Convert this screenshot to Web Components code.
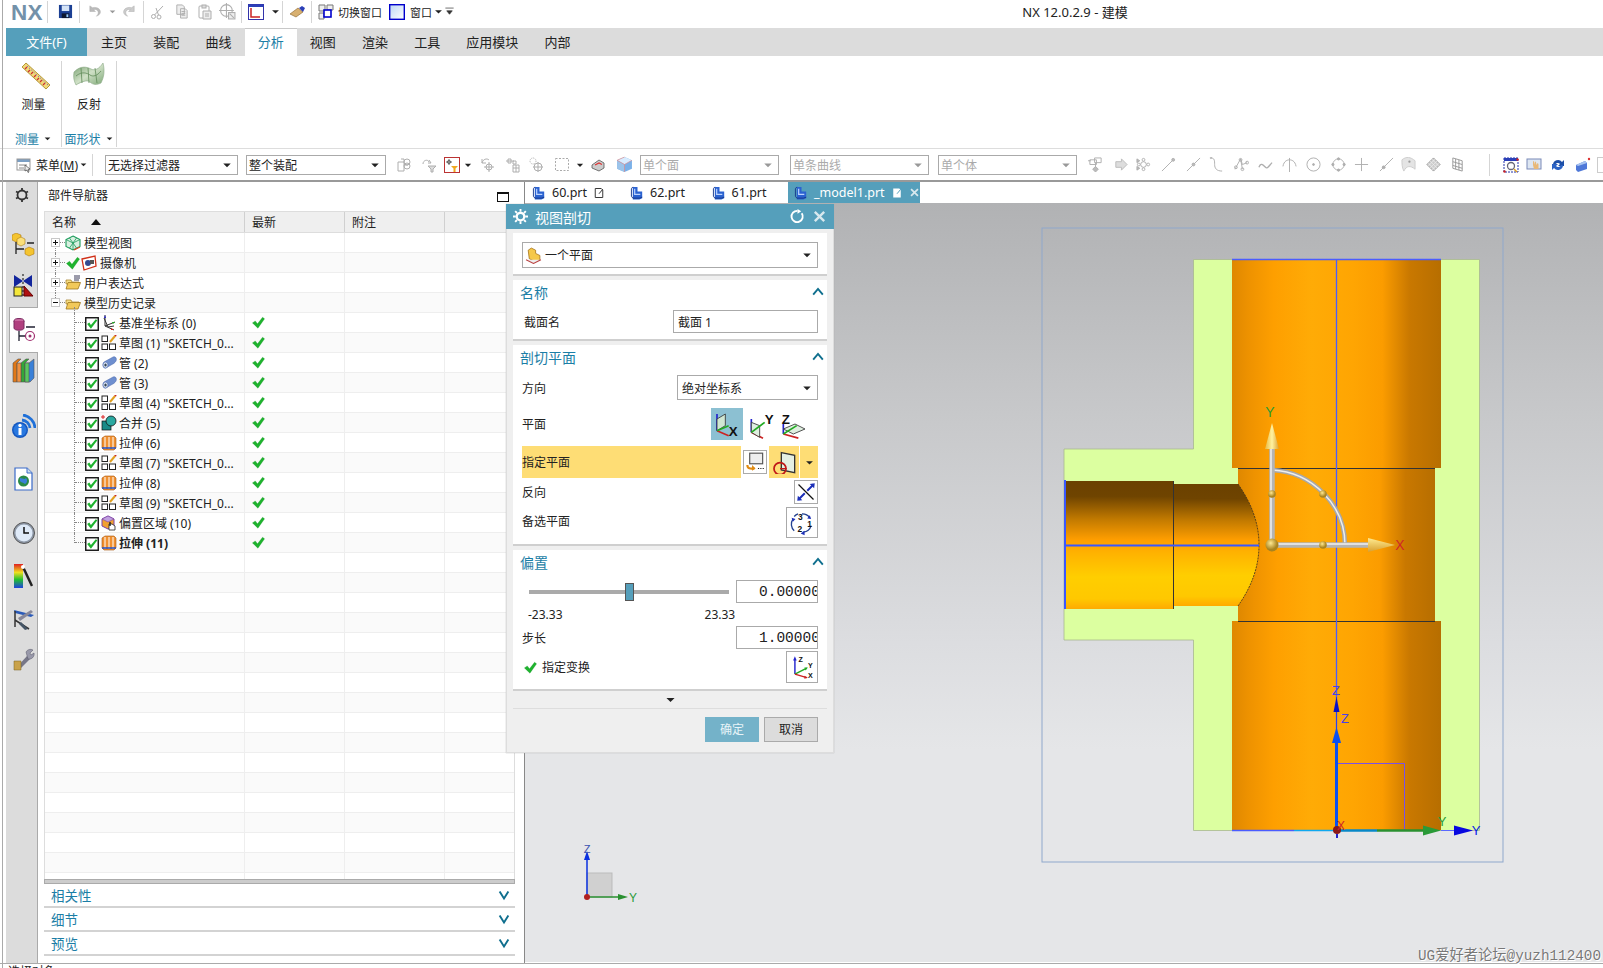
<!DOCTYPE html>
<html lang="zh"><head><meta charset="utf-8"><title>NX 12.0.2.9 - 建模</title>
<style>html,body{margin:0;padding:0;background:#fff;overflow:hidden}body{font:12px 'Noto Sans','Noto Sans CJK SC',sans-serif;color:#222}</style></head>
<body><nx-app></nx-app>
<script>
const G='#aeaeae';
const gs=(s)=>`<g fill="none" stroke="${G}" stroke-width="1">${s}</g>`;
const LT=(x,y,s,size,fill='#111')=>`<text x="${x}" y="${y}" font-size="${size}" font-weight="700" font-family="Liberation Sans" fill="${fill}">${s}</text>`;
const I={
save:`<rect x="1" y="1" width="14" height="14" fill="#1b3f93"/><rect x="4" y="1.500" width="8" height="6" fill="#d5e4f7"/><rect x="4" y="10" width="8" height="5" fill="#0d1730"/><rect x="9" y="11" width="2" height="3" fill="#9cf"/>`,
undo:`<path d="M3 2v6h6L7 6c3-1 5 1 5 3 0 2-1 3-2 4 3-1 5-3 4-6-1-3-5-4-8-3z" fill="#bbb" stroke="#aaa" stroke-width=".5"/>`,
redo:`<path d="M13 2v6H7l2-2c-3-1-5 1-5 3 0 2 1 3 2 4-3-1-5-3-4-6 1-3 5-4 8-3z" fill="#ccc" stroke="#aaa" stroke-width=".5"/>`,
cut:gs(`<circle cx="3.500" cy="12.500" r="2"/><circle cx="9" cy="13" r="2"/><path d="M4.500 11 13 2M8.500 11 6 4"/>`),
copy:gs(`<path d="M3 1h6l2 2v8H3zM7 5h5l2 2v8H7z" fill="#eee"/><path d="M8 8h4M8 10h4M8 12h4"/>`),
paste:gs(`<rect x="2" y="2" width="10" height="12" rx="1"/><rect x="5" y="1" width="4" height="3" fill="#ddd"/><path d="M6 7h8v8H6z" fill="#eee"/><path d="M8 10h4M8 12h4"/>`),
target:gs(`<circle cx="7" cy="7" r="5.500"/><path d="M7 0v14M0 7h14"/><rect x="9" y="9" width="6" height="6" fill="#eee"/><path d="m10 10 4 4"/>`),
wcs:`<rect x=".5" y=".5" width="15" height="15" fill="#fff" stroke="#33a"/><rect x=".5" y=".5" width="15" height="2.500" fill="#2b3fb8"/><path d="M3 4v9h9" fill="none" stroke="#c22" stroke-width="1.500"/>`,
brush:`<path d="M1 10 9 4l5 4-7 5z" fill="#d8b070" stroke="#86622a" stroke-width=".6"/><path d="m10 4 3-2 3 2-2 4z" fill="#2b3fb8"/>`,
sw:`<path d="M1 1h6v6H1zM9 1h6v5H9zM1 9h5v6H1z" fill="#eee" stroke="#777"/><rect x="6" y="6" width="7" height="7" fill="#fff" stroke="#00c" stroke-width="1.600"/>`,
win:`<defs><linearGradient id="w" x1="0" y1="0" x2="1" y2="1"><stop offset="0" stop-color="#bcd6f5"/><stop offset="1" stop-color="#fff"/></linearGradient></defs><rect x=".7" y=".7" width="14.600" height="14.600" fill="url(#w)" stroke="#00c" stroke-width="1.400"/>`,
dn:`<path d="M3 6h10l-5 5z" fill="#222"/>`,
gdn:`<path d="M3 6h10l-5 5z" fill="#999"/>`,
more:`<path d="M2 3h12M4 7h8l-4 5z" fill="#333" stroke="#333"/>`,
menu:`<rect x="1" y="2" width="13" height="3" fill="#7b9fc4"/><rect x="1" y="2" width="13" height="11" fill="none" stroke="#999"/><path d="M3 8h8M3 11h5" stroke="#888"/><path d="m9 8 5 4-2 .5 1 2.500-1 .5-1-2.500-2 1z" fill="#eee" stroke="#333" stroke-width=".6"/>`,
g1:gs(`<path d="M2 5h6v9H2zM5 2h3v3M8 8h4"/><circle cx="11" cy="5" r="3"/><circle cx="11" cy="9" r="3"/>`),
g2:gs(`<path d="M2 7c0-4 5-5 6-2M8 3l2 3-3 0"/><path d="M7 9h8l-3 3v3h-2v-3z" fill="#ddd"/>`),
rf:`<rect x=".5" y=".5" width="15" height="15" fill="#fff" stroke="#b33" stroke-width="1"/><path d="M5 2v6M2 5h6" stroke="#666"/><circle cx="5" cy="5" r="1.600" fill="none" stroke="#666"/><path d="M7 9h7l-2.500 2.500V15h-2v-3.500z" fill="#f0a820"/>`,
g3:gs(`<path d="M3 6c1-4 5-5 7-3M3 2v4h4"/><circle cx="10" cy="10" r="3"/><path d="M10 5v10M5 10h10"/>`),
g4:gs(`<path d="M2 4h8M4 2h3v4H4zM9 4h3v3H9zM9 8h6v7H9zM12 8v7M9 11h6"/>`),
g5:gs(`<circle cx="4" cy="4" r="3" stroke-dasharray="1 1"/><circle cx="9" cy="10" r="4"/><path d="M9 5v10M4 10h10"/>`),
box:`<rect x="1.500" y="1.500" width="13" height="12" fill="none" stroke="#aaa" stroke-dasharray="2 1.500"/>`,
cam:`<path d="M2 8 9 3l5 3v5l-5 3-7-3z" fill="#ccc" stroke="#555" stroke-width=".8"/><path d="m5 8 4-2 3 1.500" stroke="#d33" stroke-width="1.200" fill="none"/>`,
cube:`<path d="M8 1l7 3v8l-7 3-7-3V4z" fill="#7ab0e8"/><path d="M8 8l7-4-7-3-7 3z" fill="#d8ecff"/><path d="M8 8v7l-7-3V4z" fill="#9cc4ea"/><path d="M8 1 1 4l7 4 7-4M8 8v7" fill="none" stroke="#d88" stroke-width=".6"/>`,
v1:gs(`<path d="M2 3h7v5H2zM7 1h7v5H7zM8 6v5"/><path d="M8 10l3 3-3 3-3-3z" fill="#bbb"/><path d="M0 4h3"/>`),
v2:`<path d="M3 5h6V2l6 6-6 6v-3H3z" fill="#ddd" stroke="#bbb"/>`,
v3:gs(`<circle cx="8" cy="8" r="3"/><circle cx="8" cy="3" r="1.500"/><circle cx="8" cy="13" r="1.500"/><circle cx="3" cy="8" r="1.500"/><circle cx="13" cy="8" r="1.500"/><path d="m1 2 3 2-3 2zM1 10l3 2-3 2z" fill="#bbb"/>`),
v4:gs(`<path d="m1 15 12-12"/><circle cx="13" cy="3" r="1.500" fill="#bbb"/>`),
v5:gs(`<path d="m1 15 14-14"/><circle cx="8" cy="8" r="1.500" fill="#bbb"/>`),
v6:gs(`<path d="M2 1c4 0 4 3 4 7s2 7 8 7"/><circle cx="2" cy="1" r=".7"/>`),
v7:gs(`<path d="M1 13 7 2l2 6 5-2M7 2l2 11"/><circle cx="2" cy="11" r="1.500"/><circle cx="7" cy="3" r="1.500"/><circle cx="14" cy="6" r="1.500"/><circle cx="9" cy="13" r="1.500"/>`),
v8:gs(`<path d="M1 11c2-6 5-2 7 0s4-2 7-5" stroke-width="1.400"/>`),
v9:gs(`<path d="M8 1v15M1 10c1-6 5-7 7-7s6 1 7 7"/>`),
v10:gs(`<circle cx="8" cy="8" r="7"/><circle cx="8" cy="8" r="1" fill="${G}"/>`),
v11:gs(`<circle cx="8" cy="8" r="6"/><circle cx="8" cy="2" r="1.200" fill="${G}"/><circle cx="8" cy="14" r="1.200" fill="${G}"/><circle cx="2" cy="8" r="1.200" fill="${G}"/><circle cx="14" cy="8" r="1.200" fill="${G}"/>`),
v12:gs(`<path d="M8 1v14M1 8h14"/>`),
v13:gs(`<path d="m1 15 14-14"/><circle cx="5" cy="11" r="1.500" fill="${G}"/>`),
v14:`<path d="M1 3c5-4 9-3 14 1v9C10 9 6 9 3 15 1 11 1 7 1 3z" fill="#e4e4e4" stroke="#ccc"/><circle cx="9" cy="5" r="1.200" fill="#999"/>`,
v15:`<path d="M8 1l7 7-7 7-7-7z" fill="#ccc" stroke="#999"/><path d="M4 4l8 8M6 2l8 8M2 6l8 8M12 4l-8 8M10 2l-8 8M14 6l-8 8" stroke="#eee" stroke-width=".7"/>`,
v16:gs(`<path d="M3 1l10 3v11L3 12zM3 5l10 3M3 9l10 3M6 2v11M9.500 3v11" stroke="#999"/>`),
c1:`<rect x="1" y="1" width="14" height="14" fill="#fff" stroke="#23a" stroke-dasharray="2 1"/><rect x="1" y="1" width="14" height="3" fill="#2b3fb8"/><circle cx="8" cy="9" r="3.500" fill="none" stroke="#667" stroke-width="1.300"/><path d="m11 12 3 3" stroke="#e0a020" stroke-width="1.500"/><circle cx="1.500" cy="14.500" r="1.200" fill="#c22"/><circle cx="14.500" cy="2.500" r="1.200" fill="#c22"/>`,
c2:`<rect x="1" y="2" width="14" height="10" fill="#dde6f2" stroke="#7a8ab8"/><path d="M7 8V4l1 .5.500 3 .500-3 1 .5.500 3 1-2 1 1v5H8z" fill="#e8b878"/>`,
c3:`<path d="M3 8a5 5 0 0 1 9-3l2-2v6H8l2-2a3 3 0 0 0-5 1z" fill="#1d4fa8"/><path d="M13 8a5 5 0 0 1-9 3l-2 2V7h6L6 9a3 3 0 0 0 5-1z" fill="#2c63c4"/>`,
c4:`<path d="M1 8l9-4 2 2v6l-9 3-2-2z" fill="#4f78d8"/><path d="M10 4l2 2-9 3-2-1z" fill="#a9c4f0"/><circle cx="14" cy="2" r="1.200" fill="#d33"/>`,
part:`<path d="M3 2h5v5h5v7l-3 1.500H3z" fill="#2b62d0"/><path d="M3 2 1.500 4v8L3 14h7l3-1" fill="none" stroke="#15388a"/><path d="M5 4v6h6" stroke="#bcd4ff" stroke-width="1.300" fill="none"/>`,
edit:`<path d="M3 2h8l2 2v10H3z" fill="none" stroke="#333" stroke-width="1.300"/><path d="M8 9l5-6" stroke="#333" stroke-width="1.300"/>`,
editw:`<path d="M3 2h8l2 2v10H3z" fill="#fff"/><path d="M8 9l5-6" stroke="#55a0bb" stroke-width="1.300"/>`,
x:`<path d="m3 3 10 10M13 3 3 13" stroke="#d8e8ee" stroke-width="2.500"/>`,
gear:`<circle cx="8" cy="8" r="4.500" fill="none" stroke="#333" stroke-width="1.800"/><g stroke="#333" stroke-width="1.800"><path d="M8 1v2M8 13v2M2 4.500l2 1M12 10.500l2 1M2 11.500l2-1M12 5.500l2-1"/></g>`,
gearw:`<circle cx="8" cy="8" r="4" fill="none" stroke="#fff" stroke-width="2.400"/><g stroke="#fff" stroke-width="2"><path d="M8 0v3M8 13v3M0 8h3M13 8h3M2.300 2.300l2 2M11.700 11.700l2 2M2.300 13.700l2-2M11.700 4.300l2-2"/></g>`,
parts:`<g stroke="#a06a00" stroke-width=".5"><path d="M4 0l5 2v5L4 9 0 7V2z" fill="#f4c430"/><path d="M9 4l4 2v5l-4 2-4-2V6z" fill="#fbe07a"/><path d="M17 14l5 2v5l-5 2-4-2v-5z" fill="#f4c430"/></g><path d="M4 9v12M4 16h8M15 10h7" stroke="#222" stroke-width="1.300" fill="none"/>`,
con:`<path d="M1 1l9 6-9 6zM19 1l-9 6 9 6z" fill="#12259c"/><path d="M10 0v23" stroke="#000" stroke-dasharray="2 2"/><rect x="1" y="13" width="8" height="9" fill="#f3e63a" stroke="#222"/><path d="M11 22V12l9 10z" fill="#b01010" stroke="#600"/>`,
pmi:`<ellipse cx="6" cy="3" rx="5" ry="2.500" fill="#c86aa0" stroke="#7a2a60"/><path d="M1 3v7c0 3 10 3 10 0V3" fill="#b0407f" stroke="#7a2a60"/><path d="M6 13v10M6 18h6M13 9h9" stroke="#223" stroke-width="1.300" fill="none"/><circle cx="17" cy="18" r="4.500" fill="none" stroke="#a03070" stroke-width="1.200"/><circle cx="17" cy="18" r="1.500" fill="#a03070"/>`,
books:`<g stroke="#555" stroke-width=".6"><path d="M1 5l5-4h3l-4 4v19H1z" fill="#e07818"/><path d="M9 5l5-4h3l-4 4v19H9z" fill="#34a838"/><path d="M17 5l5-4v19l-4 4h-5V5z" fill="#3a80d8"/><path d="M5 5h4v19H5z" fill="#f09040"/><path d="M13 5h4v19h-4z" fill="#5ac860"/></g>`,
info:`<circle cx="8" cy="16" r="8" fill="#1558c0"/><circle cx="8" cy="16" r="6.500" fill="#2878e0"/><rect x="6.500" y="14" width="3" height="7" fill="#fff"/><circle cx="8" cy="11.500" r="1.700" fill="#fff"/><path d="M10 6a9 9 0 0 1 8 8M11 1a14 14 0 0 1 12 13" fill="none" stroke="#1f70d8" stroke-width="2.800"/>`,
web:`<path d="M1 1h12l5 5v17H1z" fill="#fff" stroke="#3a6ac8" stroke-width="1.200"/><path d="M13 1v5h5" fill="#cde" stroke="#3a6ac8"/><circle cx="9.500" cy="14" r="5.500" fill="#2a8a48"/><path d="M6 11c3 0 4 2 6 0 2 2 1 5-1 6-2-2-4-1-5-3z" fill="#3a80d8"/>`,
clock:`<circle cx="11" cy="11" r="10.500" fill="#8f99a8" stroke="#555"/><circle cx="11" cy="11" r="8.500" fill="#dfeaf8"/><path d="M11 5v6h5" stroke="#111" stroke-width="1.500" fill="none"/>`,
color:`<defs><linearGradient id="cc" x1="0" y1="0" x2="0" y2="1"><stop offset="0" stop-color="#e02020"/><stop offset=".35" stop-color="#f0e020"/><stop offset=".65" stop-color="#20c030"/><stop offset="1" stop-color="#2040e0"/></linearGradient></defs><rect x="0" y="0" width="9" height="24" fill="url(#cc)"/><path d="m9 3 9 19" stroke="#222" stroke-width="2.500"/><circle cx="9" cy="3" r="2" fill="#fff"/>`,
meas:`<path d="M1 2l20 5-3 2L2 5z" fill="#2a5ab8"/><path d="M2 3v16M2 12l14 9" stroke="#333" stroke-width="1.500"/><path d="M5 10 18 2l2 2-13 9z" fill="#889"/><path d="M8 14l7 7-3 1-6-6z" fill="#456"/>`,
wr:`<path d="M3 21 14 9l3 3L6 23z" fill="#778"/><path d="M13 5a5 5 0 0 1 7-2l-3 3 1 2 3-2a5 5 0 0 1-6 6z" fill="#99a" stroke="#556" stroke-width=".5"/><path d="M1 14h7v9H1z" fill="#c9a24a" stroke="#7a6020" stroke-width=".5"/>`,
ruler:`<g transform="translate(3 0)"><path d="M1 5 5 1l24 22-4 4z" fill="#f2d878" stroke="#b4983c"/><path d="M4 7l2-2M7 10l2-2M10 12l2-2M13 15l2-2M16 18l2-2M19 20l2-2M22 23l2-2" stroke="#c33" stroke-width="1.200"/><path d="M6 4l21 19" stroke="#55c" stroke-dasharray="1 2"/></g>`,
refl:`<defs><linearGradient id="rf" x1="0" y1="0" x2="1" y2="1"><stop offset="0" stop-color="#6f9a68"/><stop offset=".5" stop-color="#cfe0c6"/><stop offset="1" stop-color="#7ea877"/></linearGradient></defs><path d="M1 10C8 3 14 5 18 7s8 0 12-6c2 8 1 14-2 20-4 2-8 2-11-1S6 21 3 23C1 19 0 15 1 10z" fill="url(#rf)" stroke="#8aa884" stroke-width=".6"/><path d="M8 6 9 21M15 6l1 15M22 6l2 15M3 14c6-5 11-3 14-1s7 1 11-4" stroke="#5f8a58" stroke-width=".8" fill="none"/>`,
ck:`<path d="M.5 8.500 4 6 6.800 9.500 13 1.500 15.500 3.500 7.300 15z" fill="#1eb32e" stroke="#0a8a18" stroke-width=".3"/>`,
cb:`<rect x=".7" y=".7" width="11.600" height="11.600" fill="#fff" stroke="#111" stroke-width="1.300"/><path d="M2 6.500 4 5l1.500 2.500L10 2l1.500 1-6 8z" fill="#1eb32e"/>`,
mv:`<path d="M8 1l7 3.500v7L8 15l-7-3.500v-7z" fill="#d8f0e0" stroke="#1a9a5a" stroke-width="1.100"/><path d="M1 4.500 8 8l7-3.500M8 8v7M4.500 3 11.500 13M11.500 3 4.500 13" fill="none" stroke="#1a9a5a" stroke-width=".8"/><path d="m9 15 6-3" stroke="#e04020" stroke-width="1.200"/>`,
camr:`<path d="M1 4 14 1l1 10-12 4z" fill="#fff" stroke="#d03018" stroke-width="1.300"/><circle cx="7" cy="8" r="3" fill="#334a90"/><rect x="9" y="5" width="4" height="4" fill="#555"/>`,
fo:`<path d="M1 5h5l1 2h7v2H1z" fill="#f8e088" stroke="#a07820" stroke-width=".7"/><path d="M1 14 3 7.500h12.500L13 14z" fill="#f2c95a" stroke="#a07820" stroke-width=".8"/>`,
foe:`<path d="M1 5h5l1 2h7v2H1z" fill="#f8e088" stroke="#a07820" stroke-width=".7"/><path d="M1 14 3 7.500h12.500L13 14z" fill="#f2c95a" stroke="#a07820" stroke-width=".8"/><path d="M9 1h6M9 3h6M9 5h5" stroke="#224" stroke-width=".9"/>`,
dat:`<path d="M4 0v11M4 11l10-4M4 11l9 4M3 3l4 9 6-1" fill="none" stroke="#333" stroke-width="1"/><path d="M4 0 3 3h2z" fill="#22c"/><path d="M14 7l-3 0 1 2z" fill="#2a2"/><path d="M13 15l-3-2v2z" fill="#c22"/>`,
sk:`<rect x="1" y="1" width="5.500" height="5.500" fill="#fff" stroke="#222"/><rect x="1" y="9" width="5.500" height="5.500" fill="#fff" stroke="#222"/><rect x="8.500" y="9" width="6" height="5.500" fill="#fff" stroke="#222"/><path d="m9 7 5-6" stroke="#e0a020" stroke-width="2"/><path d="m14 1 1-1" stroke="#c22" stroke-width="2"/>`,
tube:`<path d="M3 7 12 2c3-1 4 2 3 4s-3 3-5 4L5 13c-3 1-4-4-2-6z" fill="#6e8fcf" stroke="#4a66a8" stroke-width=".5"/><ellipse cx="4.500" cy="10" rx="2.500" ry="3" fill="#dfe8f8" stroke="#4a66a8" stroke-width=".6"/><ellipse cx="4.500" cy="10" rx="1.200" ry="1.600" fill="#345"/>`,
uni:`<rect x="1" y="6" width="9" height="9" fill="#188a88" stroke="#111" stroke-width=".7"/><circle cx="10" cy="6" r="5" fill="#2aa8a0" stroke="#111" stroke-width=".8"/><path d="M2 0v4M0 2h4" stroke="#d22" stroke-width="1"/>`,
ext:`<path d="M1 3 4 1h9l2 2v10l-2 2H3l-2-2z" fill="#f09030" stroke="#a85810" stroke-width=".6"/><path d="M4 2v12M8 2v12M12 2v12" stroke="#fff" stroke-width="1"/><path d="M1 13h14" stroke="#2252c8" stroke-width="1.500"/>`,
off:`<path d="M7 1l6 3v7l-6 3-6-3V4z" fill="#f0a030" stroke="#7a40a8"/><path d="M1 4l6 3 6-3L7 1z" fill="#c0a0e0" stroke="#7a40a8" stroke-width=".6"/><path d="M8 9h3l3 2v4H8z" fill="#fff" stroke="#222" stroke-width=".8"/><path d="M9 7v4" stroke="#222" stroke-width="1.400"/>`,
up:`<path d="M2.500 11 8 4.500l5.500 6.500" fill="none" stroke="#0f6f8e" stroke-width="2.200"/>`,
down:`<path d="M3 4l5 8 5-8" fill="none" stroke="#0f6f8e" stroke-width="2.200"/>`,
onep:`<path d="M3 3l3-2 4 2v3l4 2v4l-4 2-6-3z" fill="#f5c84a" stroke="#a06a10" stroke-width=".7"/><path d="M1 12 8 15.500 15 12" fill="#eee" stroke="#b44"/>`,
px:`<path d="M3 3v10" stroke="#22c" fill="none"/><path d="M3 13l7 3" stroke="#c22" fill="none"/><path d="M3 6 8 3v7l-5 3z" fill="#cfe6d2" stroke="#333" stroke-width=".5"/><path d="M3 13l7-3" stroke="#2a2"/>${LT(10,16,'X',8)}`,
py:`<path d="M2 6v8" stroke="#22c" fill="none"/><path d="M2 14l7 3.500" stroke="#c22"/><path d="M2 8l5 2v7l-5-3z" fill="#dfefe0" stroke="#333" stroke-width=".5"/><path d="M2 14l8-6" stroke="#2a2"/>${LT(10,9,'Y',8)}`,
pz:`<path d="M2 9v6" stroke="#22c"/><path d="M2 15l9 2.500" stroke="#c22"/><path d="M2 12l7-3 6 3-7 3z" fill="#dfefe0" stroke="#333" stroke-width=".5"/><path d="M2 15l8-5" stroke="#2a2"/>${LT(1,9,'Z',8)}`,
plb:`<rect x="4" y="1" width="11" height="9" fill="#eee" stroke="#555"/><path d="M2 11c0 4 4 3 6 3" stroke="#e08a10" stroke-width="1.800" fill="none"/><path d="M6 11l3 3-3 2z" fill="#e08a10"/><path d="M11 14h1M13 14h1M15 14h1" stroke="#222"/>`,
pln:`<path d="M7 2l10 2v13l-10-2z" fill="#e4efe2" stroke="#333"/><circle cx="6" cy="14" r="4.500" fill="none" stroke="#c01818" stroke-width="1.300"/><path d="M6 14h5" stroke="#c01818"/>`,
rev:`<path d="M2 2l12 12" stroke="#111"/><path d="m14 2-5 5M2 14l5-5" stroke="#1c2fb8" stroke-width="1.600"/><path d="m15 1-4 .5L14.500 5zM1 15l4-.5L1.500 11z" fill="#1c2fb8"/>`,
rot:`<path d="M10 3a7 7 0 0 1 6 3M17 12a7 7 0 0 1-6 5M4 16a7 7 0 0 1-1-9M4 5a7 7 0 0 1 3-2" fill="none" stroke="#22408f"/><path d="m17 7-3-.500 2-2.500zM9 18l3-2v3.500zM2 6l3 1-2 2z" fill="#1c2fb8"/>${LT(7,8,'3',6.500)}${LT(14,13,'1',6.500)}${LT(6.500,17,'2',6.500)}`,
csys:`<path d="M5 17V5" stroke="#22c" stroke-width="1.200"/><path d="M5 17 15 12" stroke="#2a2" stroke-width="1.200"/><path d="M5 17 15 20" stroke="#c22" stroke-width="1.200"/><path d="M5 2 3.500 5.500h3z" fill="#22c"/><path d="m16 11.500-3 0 1 2.500z" fill="#2a2"/><path d="m16 20-3-1.500v2.500z" fill="#c22"/>${LT(8,7,'Z',6)}${LT(16,12,'Y',6)}${LT(16,20.500,'X',6)}`,
reset:`<path d="M12.500 4.500A6 6 0 1 1 8 2" fill="none" stroke="#fff" stroke-width="2"/><path d="M8 0v5l4-2.500z" fill="#fff"/>`,
};
const ic=(n,w=16,h=w,vw=16,vh=vw)=>`<svg width="${w}" height="${h}" viewBox="0 0 ${vw} ${vh}" style="display:block;flex:none">${I[n]}</svg>`;
const define=(tag,css,html)=>{customElements.define(tag,class extends HTMLElement{
  constructor(){super();this.attachShadow({mode:'open'})}
  connectedCallback(){this.shadowRoot.innerHTML=`<style>${css}</style>`+(typeof html==='function'?html(this):html)}
})};
/* lays items out in flow, with margins worked out from each item's intended left edge */
const flowRow=(items)=>{let p=0,o='';for(const[x,w,c]of items){o+=`<span style="margin-left:${x-p}px;flex:none;width:${w}px;display:flex;align-items:center;justify-content:center">${c}</span>`;p=x+w}return o};
const sep=(x,h=22)=>[x,1,`<i style="display:block;width:1px;height:${h}px;background:#d5d5d5"></i>`];
const txt=(s,st='')=>`<span style="white-space:nowrap;${st}">${s}</span>`;

define('nx-select',`:host{display:flex;align-items:center;box-sizing:border-box;border:1px solid #aaa;background:#fff;height:100%;width:100%;padding:0 4px 0 2px;font-size:12px;color:#222;white-space:nowrap}
:host([off]){color:#aaa}.t{flex:1;display:flex;align-items:center;gap:3px}`,
 e=>`<span class="t"><slot></slot></span>${ic(e.hasAttribute('off')?'gdn':'dn',12)}`);

define('nx-titlebar',`:host{display:flex;align-items:center;height:28px;box-sizing:border-box;padding-bottom:5px;background:#fff;font-size:11px}`,()=>flowRow([
 [10,34,`<span style="font:bold 22.500px 'Liberation Sans';color:#7391a9;letter-spacing:.3px;line-height:24px;margin-top:3px">NX</span>`],
 sep(47),[58,15,ic('save',15)],sep(79),[87,15,ic('undo',15)],[108,9,ic('gdn',9)],[122,15,ic('redo',15)],sep(143),
 [150,16,ic('cut',16)],[174,15,ic('copy',15)],[197,16,ic('paste',16)],[219,17,ic('target',17)],sep(241),
 [248,16,ic('wcs',16)],[270,11,ic('dn',11)],sep(282),[289,16,ic('brush',16)],sep(311),[318,16,ic('sw',16)],
 [338,44,txt('切换窗口')],[389,16,ic('win',16)],[409,24,txt('窗口')],[433,11,ic('dn',11)],[444,11,ic('more',11)],
 [1023,104,txt('NX 12.0.2.9 - 建模','font-size:13px')]]));

define('nx-tab',`:host{display:flex;align-items:center;justify-content:center;height:28px;width:52.200px;flex:none;font-size:13px;color:#222;box-sizing:border-box;padding-bottom:2px}
:host([on]){background:#fff;color:#1b7ea6;border-top:1px solid #c8c8c8}:host([wide]){width:78px}:host([file]){width:81px;background:#559fbb;color:#fff;margin-right:1px}`,`<slot></slot>`);
define('nx-tabs',`:host{display:flex;height:28px;background:#dcdcdc;margin-left:6px}`,`<slot></slot>`);
define('nx-rbtn',`:host{display:flex;flex-direction:column;align-items:center;font-size:12px;gap:5px;padding-top:1px;white-space:nowrap}.i{height:28px;display:flex;align-items:center}`,
 e=>`<span class="i">${ic(e.getAttribute('i'),32,28,32,28)}</span><slot></slot>`);
define('nx-rgroup',`:host{display:flex;flex-direction:column;width:55px;height:86px;box-sizing:border-box;border-right:1px solid #d5d5d5}
:host([first]){width:56px}.b{flex:1;display:flex;justify-content:center;min-height:0}.l{display:flex;align-items:center;justify-content:center;gap:4px;height:17px;color:#1b7ea6;font-size:12px;white-space:nowrap;flex:none}`,
 e=>`<div class="b"><slot></slot></div><div class="l">${e.getAttribute('label')}${ic('dn',9)}</div>`);
define('nx-ribbon',`:host{display:flex;height:93px;box-sizing:border-box;padding:5px 0 0 6px;border-bottom:1px solid #ddd;background:#fff}`,`<slot></slot>`);

define('nx-toolbar',`:host{display:flex;align-items:center;height:33px;box-sizing:border-box;border-bottom:2px solid #999;background:#fff;overflow:hidden;font-size:12px}
nx-select{height:20px}`,()=>{
 const sel=(s,off)=>`<nx-select ${off?'off':''}>${s}</nx-select>`;
 const base=[[16,16,ic('menu',16)],[36,42,txt('菜单(<u>M</u>)')],[79,9,ic('dn',9)],sep(92),
 [105,133,sel('无选择过滤器')],[246,140,sel('整个装配')],[396,16,ic('g1',16)],[421,16,ic('g2',16)],[444,16,ic('rf',16)],[463,10,ic('dn',10)],
 [479,16,ic('g3',16)],[504,16,ic('g4',16)],[529,16,ic('g5',16)],[554,16,ic('box',16)],[575,10,ic('dn',10)],[590,16,ic('cam',16)],[616,17,ic('cube',17)],
 [640,139,sel('单个面',1)],[790,139,sel('单条曲线',1)],[938,139,sel('单个体',1)]];
 const xs=[[1088,'v1'],[1113,'v2'],[1136,'v3'],[1161,'v4'],[1186,'v5'],[1209,'v6'],[1234,'v7'],[1258,'v8'],[1282,'v9'],[1306,'v10'],[1331,'v11'],[1354,'v12'],[1379,'v13'],[1401,'v14'],[1426,'v15'],[1450,'v16']];
 xs.forEach(([x,n])=>base.push([x,15,ic(n,15)]));
 base.push(sep(1489,22),[1503,16,ic('c1',16)],[1526,16,ic('c2',16)],[1550,16,ic('c3',16)],[1575,16,ic('c4',16)],[1597,6,`<i style="display:block;width:6px;height:16px;box-sizing:border-box;border:1px solid #ccc;border-right:0"></i>`]);
 return flowRow(base)});

define('nx-rail-item',`:host{display:flex;justify-content:center;align-items:center;flex:none}
:host([on]){background:#fff;border:1px solid #aaa;border-right:0;margin:0 -1px 0 3px;box-sizing:border-box;height:46px;position:relative;z-index:1}`,
 e=>{const w=+e.getAttribute('w')||24,h=+e.getAttribute('h')||24;return ic(e.getAttribute('i'),w,h,+e.getAttribute('vw')||w,+e.getAttribute('vh')||h)});
define('nx-rail',`:host{display:flex;flex-direction:column;width:32px;box-sizing:border-box;background:#dcdcdc;border-right:1px solid #aaa;margin-left:6px;flex:none}`,`<slot></slot>`);

define('nx-row',`:host{display:grid;grid-template-columns:200px 100px 100px 1fr;height:20px;box-sizing:border-box;border-bottom:1px solid #eee;font-size:12px;color:#222;flex:none}
:host([alt]){background:#fafafa}
.c{border-right:1px solid #eee;display:flex;align-items:center;position:relative;white-space:nowrap;box-sizing:border-box}
.c:last-child{border:0}
.e{position:absolute;left:6px;top:5px;width:9px;height:9px;box-sizing:border-box;border:1px solid #c8c8c8;background:#fff;z-index:1;display:block}
.e svg{display:block}
.v{position:absolute;border-left:1px dotted #888}.h{position:absolute;border-top:1px dotted #888}
.l{padding-left:7px}`,e=>{
 const lvl=+e.getAttribute('level')||0,i=e.getAttribute('i'),exp=e.getAttribute('exp'),pre=e.hasAttribute('pre');
 let c='';
 if(!i)return `<div class="c"></div><div class="c"></div><div class="c"></div><div class="c"></div>`;
 if(lvl===0){
  c+=`<span class="e"><svg width="7" height="7"><path d="M1 3.500h5${exp==='+'?'M3.500 1v5':''}" stroke="#111"/></svg></span>`;
  if(e.hasAttribute('vf'))c+=`<i class="v" style="left:10px;top:0;height:20px"></i>`;
  if(e.hasAttribute('vt'))c+=`<i class="v" style="left:10px;top:9px;height:11px"></i>`;
  if(e.hasAttribute('vb'))c+=`<i class="v" style="left:10px;top:0;height:9px"></i>`;
  c+=`<i class="h" style="left:15px;top:9px;width:5px"></i>`;
  if(exp==='−')c+=`<i class="v" style="left:29px;top:14px;height:6px"></i>`;
  if(pre)c+=`<span style="margin-left:21px;margin-right:1px">${ic('ck',14)}</span>`;
  c+=`<span style="margin-left:${pre?0:20}px;margin-right:3px">${ic(i,16)}</span>`;
 }else{
  c+=`<i class="v" style="left:29px;top:0;height:${e.hasAttribute('last')?10:20}px"></i><i class="h" style="left:30px;top:9px;width:10px"></i>`;
  c+=`<span style="margin-right:2px;margin-left:0;margin-top:2px">${ic('cb',14,14,13,13)}</span><span style="margin-right:2px">${ic(i,16)}</span>`;
 }
 return `<div class="c" style="padding-left:${lvl?40:0}px">${c}<slot></slot></div><div class="c l">${e.hasAttribute('ok')?ic('ck',13):''}</div><div class="c"></div><div class="c"></div>`});

define('nx-tree',`:host{display:block;margin-left:6px;width:471px;box-sizing:border-box;border-left:1px solid #ddd;border-right:1px solid #ddd;height:668px;overflow:hidden;flex:none}
.hd{display:grid;grid-template-columns:200px 100px 100px 1fr;height:22px;background:#efefef;border-top:1px solid #ddd;box-sizing:border-box;font-size:12px;border-bottom:1px solid #ddd}
.hd span{border-right:1px solid #d0d0d0;padding-left:7px;display:flex;align-items:center;gap:14px}.hd span:last-child{border:0}
.body{display:flex;flex-direction:column;height:646px;overflow:hidden}`,`<div class="hd"><span>名称 <svg width="12" height="8"><path d="M1 7h10L6 1z" fill="#111"/></svg></span><span>最新</span><span>附注</span><span></span></div><div class="body"><slot></slot></div>`);

define('nx-fold',`:host{display:flex;align-items:center;justify-content:space-between;height:24px;box-sizing:border-box;margin-left:6px;width:471px;border-bottom:2px solid #d3d3d3;padding:0 4px 0 7px;color:#1b7ea6;font-size:13.500px;flex:none}`,`<slot></slot>${ic('down',14)}`);
define('nx-navigator',`:host{display:flex;flex-direction:column;width:487px;box-sizing:border-box;border-right:1px solid #888;background:#fff;flex:none;overflow:hidden}
.tt{display:flex;justify-content:space-between;align-items:center;height:29px;padding:0 15px 3px 10px;box-sizing:border-box;flex:none}
.mx{width:12px;height:10px;border:1.500px solid #111;border-top-width:2.500px;box-sizing:border-box;margin-top:3px}`,
 `<div class="tt"><span>部件导航器</span><i class="mx"></i></div><slot></slot>`);

define('nx-scroll',`:host{display:block;margin-left:6px;width:471px;height:5px;box-sizing:border-box;border:1px solid #aaa;background:#ccc;flex:none}`,``);

define('nx-doctab',`:host{display:flex;align-items:center;height:21px;flex:none;font-size:12.500px;color:#222;gap:5px;white-space:nowrap;box-sizing:border-box}
:host([on]){background:#559fbb;color:#fff;padding:0 0 0 6px}`,e=>`${ic('part',15)}<slot></slot>${e.hasAttribute('ed')?`<span style="margin-left:1px">${ic(e.hasAttribute('on')?'editw':'edit',12)}</span>`:''}${e.hasAttribute('on')?`<span style="margin-left:1px">${ic('x',11)}</span>`:''}`);
define('nx-doctabs',`:host{display:flex;height:21px;background:#fff;padding-left:7px;flex:none}`,`<slot></slot>`);

define('nx-viewport',`:host{display:block;height:759px;flex:none;background:linear-gradient(#b1b2b4 0,#c8c9cb 29%,#dcdde0 58%,#e5e6e8 72%,#e5e6e8 100%)}svg{display:block}text{font-family:'Liberation Sans',sans-serif}`,
`<svg width="1078" height="759" viewBox="525 203 1078 759"><defs>
<linearGradient id="ho"><stop offset="0" stop-color="#df8800"/><stop offset=".08" stop-color="#ee9200"/><stop offset=".2" stop-color="#fe9f00"/><stop offset=".38" stop-color="#ffab06"/><stop offset=".58" stop-color="#ffa502"/><stop offset=".72" stop-color="#fb9c00"/><stop offset=".85" stop-color="#c97800"/><stop offset="1" stop-color="#b76e00"/></linearGradient>
<linearGradient id="ve" x1="0" y1="0" x2="0" y2="1"><stop offset="0" stop-color="#6b4100"/><stop offset=".12" stop-color="#6f4400"/><stop offset=".3" stop-color="#c27a00"/><stop offset=".46" stop-color="#ff9e00"/><stop offset=".56" stop-color="#ffb200"/><stop offset=".75" stop-color="#ffce00"/><stop offset=".92" stop-color="#ffc800"/><stop offset="1" stop-color="#ffaa00"/></linearGradient>
<linearGradient id="cy" x1="0" y1="0" x2="1" y2="0"><stop offset="0" stop-color="#e8b840"/><stop offset=".5" stop-color="#fff2a0"/><stop offset="1" stop-color="#dca030"/></linearGradient>
<linearGradient id="cx" x1="0" y1="0" x2="0" y2="1"><stop offset="0" stop-color="#ffeb90"/><stop offset="1" stop-color="#d8a030"/></linearGradient>
<radialGradient id="sp" cx=".4" cy=".35"><stop offset="0" stop-color="#ffe890"/><stop offset="1" stop-color="#a88420"/></radialGradient></defs>
<rect x="1042" y="228" width="461" height="634" fill="none" stroke="#8fa8cc"/>
<path d="M1193.500 259.500h286v571h-286v-190.500h-129.500v-191h129.500z" fill="#dcffa0" stroke="#a8b890" stroke-width=".8"/>
<rect x="1232" y="259" width="209" height="209" fill="url(#ho)"/><rect x="1238" y="468" width="197" height="153" fill="url(#ho)"/><rect x="1232" y="621" width="209" height="209" fill="url(#ho)"/>
<rect x="1065" y="481" width="108" height="128" fill="url(#ve)"/>
<path d="M1173 484h65c14 20 21 40 21 61s-7 41-21 61h-65z" fill="url(#ve)"/>
<path d="M1238 484c14 20 21 40 21 61s-7 41-21 61" fill="none" stroke="#3a3020" stroke-dasharray="2 1" stroke-width=".8"/>
<path d="M1173.500 481v128M1238 468.500h197M1238 621.500h197" stroke="#333" stroke-width="1"/>
<path d="M1336.500 259v571M1232 259.500h209" stroke="#4a5cff" stroke-width="1.300"/>
<path d="M1065 545.500h194M1065 480v129" stroke="#3a58ff" stroke-width="2"/>
<path d="M1272 470c40 2 73 35 73 75" fill="none" stroke="#a8a8a8" stroke-width="4.500"/><path d="M1272 470c40 2 73 35 73 75" fill="none" stroke="#eee" stroke-width="1.500"/>
<path d="M1272 545v-96M1272 545h96" stroke="#b4b4b4" stroke-width="5.500"/><path d="M1271 545v-96M1272 544h96" stroke="#f0f0f0" stroke-width="1.500"/>
<path d="M1272 423l7 26h-14z" fill="url(#cy)"/><path d="M1395 545l-27 7v-14z" fill="url(#cx)"/>
<circle cx="1272" cy="545" r="6.500" fill="url(#sp)"/><circle cx="1272" cy="494" r="3.800" fill="url(#sp)"/><circle cx="1323" cy="494" r="3.800" fill="url(#sp)"/><circle cx="1323" cy="545" r="3.800" fill="url(#sp)"/>
<text x="1270" y="417" font-size="14" fill="#2c9a30" text-anchor="middle">Y</text><text x="1400" y="550" font-size="14" fill="#d02828" text-anchor="middle">X</text>
<path d="M1337 763.500h67.500V830" fill="none" stroke="#7a50e8"/>
<path d="M1336.500 697v133" stroke="#2a40f0"/><path d="M1336.500 743v88" stroke="#0a50f0" stroke-width="3"/>
<path d="M1336.500 727l4.500 16h-9z" fill="#0a50f0"/><path d="M1336.500 697l3 15h-6z" fill="#0a10c8"/>
<path d="M1232 830.500h62" stroke="#4a5cff" stroke-width="1.500"/><path d="M1294 830.500h43" stroke="#10a8f0" stroke-width="1.500"/><path d="M1336 830.500h41" stroke="#0888c8" stroke-width="2.500"/><path d="M1377 830.500h46" stroke="#2a9030" stroke-width="2.500"/>
<path d="M1441 830.500l-18-5v10z" fill="#2a9a38"/><path d="M1441 830.500h16" stroke="#5a68ff"/><path d="M1473 830.500l-19-5v10z" fill="#0808e0"/>
<circle cx="1337" cy="830" r="4" fill="#8a1818"/><path d="M1337 834v4" stroke="#22c" stroke-width="2"/>
<text x="1336" y="695" font-size="13" fill="#4a40e8" text-anchor="middle">Z</text><text x="1345" y="723" font-size="13" fill="#4a40e8" text-anchor="middle">Z</text><text x="1341" y="830" font-size="12" fill="#d02828" text-anchor="middle">X</text>
<text x="1442" y="826" font-size="13" fill="#2a9a38" text-anchor="middle">Y</text><text x="1476" y="835" font-size="13" fill="#0a20e8" text-anchor="middle">Y</text>
<rect x="587" y="873" width="25" height="24" fill="#d0d0d0" stroke="#bbb"/>
<path d="M587 897v-40" stroke="#0a30e0" stroke-width="1.500"/><path d="M587 851l3 9h-6z" fill="#0a30e0"/><path d="M587 897h32" stroke="#2a9030" stroke-width="1.500"/><path d="M628 897l-10-3v6z" fill="#2a9030"/><circle cx="587" cy="897" r="3" fill="#b02020"/>
<text x="587" y="853" font-size="11" fill="#3a50b0" text-anchor="middle">Z</text><text x="633" y="902" font-size="12" fill="#2a9a38" text-anchor="middle">Y</text>
</svg>`);

/* dialog */
define('nx-card',`:host{display:block;background:#fff;margin:0 6px 4px;border-bottom:2px solid #cfcfcf;box-sizing:border-box;padding:0 9px;font-size:12px}
.h{display:flex;justify-content:space-between;align-items:center;height:26px;margin:0 -7px 0 -2px;padding-bottom:2px;box-sizing:border-box;color:#1b7ea6;font-size:14px}
.b{display:flex;flex-direction:column}`,
 e=>`${e.getAttribute('heading')?`<div class="h">${e.getAttribute('heading')}${ic('up',14)}</div>`:''}<div class="b"><slot></slot></div>`);
define('nx-frow',`:host{display:flex;align-items:center;justify-content:space-between;flex:none;white-space:nowrap}`,`<slot></slot>`);
define('nx-ibtn',`:host{display:flex;align-items:center;justify-content:center;box-sizing:border-box;border:1px solid #aaa;background:#fff;flex:none}`,
 e=>ic(e.getAttribute('i'),+e.getAttribute('s')||18,+e.getAttribute('s')||18,+e.getAttribute('v')||16,+e.getAttribute('v')||16));
define('nx-input',`:host{display:flex;align-items:center;box-sizing:border-box;border:1px solid #aaa;background:#fff;flex:none;overflow:hidden;font-size:12px;padding:0 4px;white-space:nowrap}
:host([num]){justify-content:flex-start;padding-left:22px;font:14.500px 'Liberation Mono',monospace;color:#222;padding-right:0}`,`<slot></slot>`);
define('nx-slider',`:host{display:block;position:relative;width:200px;height:18px;margin-left:7px;flex:none}
.t{position:absolute;left:0;right:0;top:7px;height:4px;background:#aaa}.k{position:absolute;left:96px;top:0;width:9px;height:18px;box-sizing:border-box;background:#559fbb;border:1px solid #555}`,`<i class="t"></i><i class="k"></i>`);
define('nx-dialog',`:host{position:absolute;left:506px;top:204px;width:328px;height:549px;background:#efefef;box-sizing:border-box;border:1px solid #ddd;border-top:0;box-shadow:0 0 1px #aaa;font-size:12px;display:flex;flex-direction:column;z-index:5}
.tb{height:25px;margin:0 -1px;background:#559fbb;color:#fff;display:flex;align-items:center;font-size:14px;padding:0 7px 0 7px;flex:none;gap:7px;white-space:nowrap}
.sp{flex:1}.body{padding-top:4px;flex:1;display:flex;flex-direction:column}
.more{height:17px;margin:-4px 6px 0;border-bottom:1px solid #ddd;display:flex;justify-content:center;align-items:center;flex:none}
.ft{display:flex;justify-content:flex-end;gap:5px;padding:8px 15px 0 0}
.bt{width:54px;height:25px;box-sizing:border-box;display:flex;align-items:center;justify-content:center;font-size:12px;padding-bottom:1px}
.ok{background:#74b2c9;color:#e8f4f8}.no{background:#dcdcdc;border:1px solid #aaa;color:#222}`,
 `<div class="tb">${ic('gearw',15)}<span>视图剖切</span><span class="sp"></span>${ic('reset',15)}<span style="margin-left:0">${ic('x',15)}</span></div><div class="body"><slot></slot>
 <div class="more">${ic('dn',13)}</div><div class="ft"><span class="bt ok">确定</span><span class="bt no">取消</span></div></div>`);

define('nx-statusbar',`:host{display:block;height:6px;overflow:hidden;border-top:1px solid #aaa;background:#fff;padding-left:8px;font-size:12px;line-height:16px;color:#222;box-sizing:border-box}`,`<slot></slot>`);
define('nx-watermark',`:host{position:absolute;right:2px;top:947px;font:14.300px/18px 'Liberation Mono','Noto Sans CJK SC',monospace;color:#777;text-shadow:0 0 1px #fff,1px 1px 0 #fff;white-space:nowrap;z-index:6}`,`<slot></slot>`);

define('nx-main',`:host{display:flex;height:781px;background:#fff}`,`<slot></slot>`);
define('nx-work',`:host{display:flex;flex-direction:column;flex:1;min-width:0;overflow:hidden}`,`<slot></slot>`);

const rows=[
 ['mv','+','模型视图','vt'],['camr','+','摄像机','vf pre'],['foe','+','用户表达式','vf'],['fo','−','模型历史记录','vb'],
];
const kids=[['dat','基准坐标系 (0)'],['sk','草图 (1) "SKETCH_0...'],['tube','管 (2)'],['tube','管 (3)'],['sk','草图 (4) "SKETCH_0...'],['uni','合并 (5)'],['ext','拉伸 (6)'],['sk','草图 (7) "SKETCH_0...'],['ext','拉伸 (8)'],['sk','草图 (9) "SKETCH_0...'],['off','偏置区域 (10)'],['ext','<b>拉伸 (11)</b>']];
define('nx-app',`:host{display:block;position:relative;width:1603px;height:968px;overflow:hidden;background:#fff;font:12px 'Noto Sans','Noto Sans CJK SC',sans-serif;color:#222}
.edge{position:absolute;left:2px;top:0;width:1px;height:100%;background:#aaa}`,()=>{
 let n=0;
 const alt=()=>(n++%2?'alt':'');
 const r0=rows.map(r=>`<nx-row i="${r[0]}" exp="${r[1]}" ${r[3]} ${alt()}>${r[2]}</nx-row>`).join('');
 const r1=kids.map((k,i)=>`<nx-row i="${k[0]}" level="1" ok ${i===kids.length-1?'last':''} ${alt()}>${k[1]}</nx-row>`).join('');
 let blank='';for(let i=0;i<17;i++)blank+=`<nx-row ${alt()}></nx-row>`;
 const rail=[['gear',16,16,16,16,5],['parts',23,24,0,0,30],['con',21,24,0,0,17],['pmi',23,24,0,0,0],['books',24,25,0,0,5],['info',24,24,0,0,31],['web',19,24,0,0,29],['clock',22,22,0,0,31],['color',19,24,0,0,20],['meas',22,22,0,0,20],['wr',22,24,0,0,17]];
 const railHtml=rail.map((a,i)=>{
  if(a[0]==='pmi')return `<nx-rail-item on i="pmi" w="23" h="25" style="margin-top:9px"></nx-rail-item>`;
  return `<nx-rail-item i="${a[0]}" w="${a[1]}" h="${a[2]}" ${a[3]?`vw="${a[3]}" vh="${a[4]}"`:''} style="margin-top:${a[5]}px;margin-left:${a[0]==='gear'?0:4}px"></nx-rail-item>`}).join('');
 return `<i class="edge"></i><nx-titlebar></nx-titlebar>
 <nx-tabs><nx-tab file>文件(F)</nx-tab><nx-tab>主页</nx-tab><nx-tab>装配</nx-tab><nx-tab>曲线</nx-tab><nx-tab on>分析</nx-tab><nx-tab>视图</nx-tab><nx-tab>渲染</nx-tab><nx-tab>工具</nx-tab><nx-tab wide>应用模块</nx-tab><nx-tab>内部</nx-tab></nx-tabs>
 <nx-ribbon><nx-rgroup first label="测量"><nx-rbtn i="ruler">测量</nx-rbtn></nx-rgroup><nx-rgroup label="面形状"><nx-rbtn i="refl">反射</nx-rbtn></nx-rgroup></nx-ribbon>
 <nx-toolbar></nx-toolbar>
 <nx-main><nx-rail>${railHtml}</nx-rail>
 <nx-navigator><nx-tree>${r0}${r1}${blank}</nx-tree><nx-scroll></nx-scroll><nx-fold>相关性</nx-fold><nx-fold>细节</nx-fold><nx-fold>预览</nx-fold></nx-navigator>
 <nx-work><nx-doctabs><nx-doctab ed style="width:98px">60.prt</nx-doctab><nx-doctab style="width:81.500px">62.prt</nx-doctab><nx-doctab style="width:76.500px">61.prt</nx-doctab><nx-doctab on ed style="width:132px">_model1.prt</nx-doctab></nx-doctabs><nx-viewport></nx-viewport></nx-work></nx-main>
 <nx-statusbar>选择对象</nx-statusbar>
 <nx-dialog>
  <nx-card style="padding-top:9px;padding-bottom:6px"><nx-select style="height:26px">${ic('onep',17)}一个平面</nx-select></nx-card>
  <nx-card heading="名称" style="padding-bottom:6px"><nx-frow style="height:23px;margin-top:4px"><span style="margin-left:2px">截面名</span><nx-input style="width:145px;height:23px">截面 1</nx-input></nx-frow></nx-card>
  <nx-card heading="剖切平面" style="padding-bottom:6px">
   <nx-frow style="height:25px;margin-top:4px"><span>方向</span><nx-select style="width:141px;height:25px;padding-left:4px">绝对坐标系</nx-select></nx-frow>
   <nx-frow style="height:32px;margin-top:8px"><span>平面</span><span style="display:flex;align-items:center;margin-right:8px"><span style="width:32px;height:32px;background:#8cc0d2;display:flex;align-items:center;justify-content:center">${ic('px',30,30,18,18)}</span><span style="margin-left:5px">${ic('py',30,30,18,18)}</span><span style="margin-left:2px">${ic('pz',30,30,18,18)}</span></span></nx-frow>
   <nx-frow style="height:32px;margin-top:6px"><span style="width:221px;height:32px;background:#fedd75;display:flex;align-items:center">指定平面</span><nx-ibtn i="plb" style="width:24px;height:24px;margin-left:2px" s="20" v="17"></nx-ibtn><span style="margin-left:2px;width:49px;height:32px;background:#fedd75;display:flex;align-items:center;flex:none"><span style="width:31px;display:flex;justify-content:center;border-right:1px solid #fff;height:32px;align-items:center;box-sizing:border-box">${ic('pln',24,24,18,18)}</span><span style="margin-left:4px">${ic('dn',11)}</span></span></nx-frow>
   <nx-frow style="height:24px;margin-top:2px"><span>反向</span><nx-ibtn i="rev" style="width:24px;height:24px" s="20"></nx-ibtn></nx-frow>
   <nx-frow style="height:31px;margin-top:3px"><span style="margin-top:-3px">备选平面</span><nx-ibtn i="rot" style="width:32px;height:31px" s="26" v="20"></nx-ibtn></nx-frow>
  </nx-card>
  <nx-card heading="偏置" style="padding-bottom:6px">
   <nx-frow style="height:23px;margin-top:4px"><nx-slider></nx-slider><nx-input num style="width:82px;height:23px">0.000000</nx-input></nx-frow>
   <nx-frow style="height:16px;margin-top:3px;justify-content:flex-start"><span style="margin-left:6px">-23.33</span><span style="margin-left:142px">23.33</span></nx-frow>
   <nx-frow style="height:23px;margin-top:4px"><span>步长</span><nx-input num style="width:82px;height:23px">1.000000</nx-input></nx-frow>
   <nx-frow style="height:32px;margin-top:2px"><span style="display:flex;align-items:center;gap:5px;margin-left:2px">${ic('ck',13)}指定变换</span><nx-ibtn i="csys" style="width:32px;height:32px" s="26" v="22"></nx-ibtn></nx-frow>
  </nx-card>
 </nx-dialog>
 <nx-watermark>UG爱好者论坛@yuzh112400</nx-watermark>`});
</script></body></html>
